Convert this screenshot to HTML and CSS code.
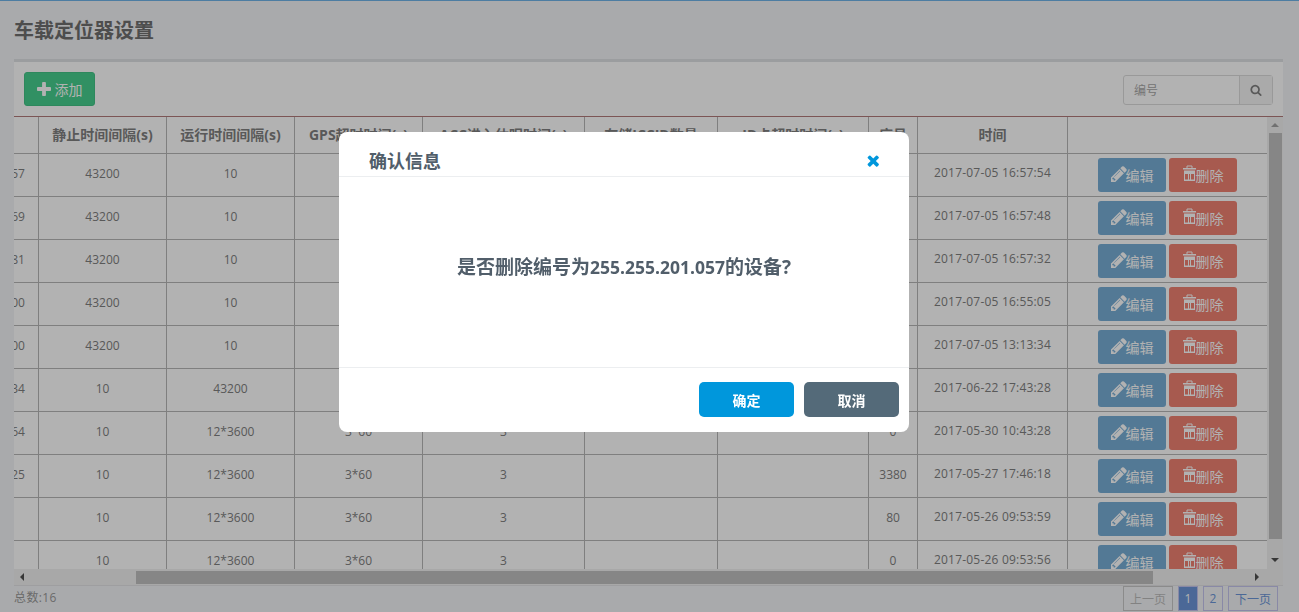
FILE: index.html
```html
<!DOCTYPE html>
<html lang="zh-CN">
<head>
<meta charset="utf-8">
<title>车载定位器设置</title>
<link rel="stylesheet" href="styles.css">
</head>
<body>
<svg class="defs" width="0" height="0" aria-hidden="true">
<symbol id="i-plus" viewBox="0 0 1408 1408"><path d="M1408 608v192q0 40-28 68t-68 28h-416v416q0 40-28 68t-68 28h-192q-40 0-68-28t-28-68v-416h-416q-40 0-68-28t-28-68v-192q0-40 28-68t68-28h416v-416q0-40 28-68t68-28h192q40 0 68 28t28 68v416h416q40 0 68 28t28 68z"/></symbol>
<symbol id="i-times" viewBox="240 230 1260 1340"><path d="M1490 1322q0 40-28 68l-136 136q-28 28-68 28t-68-28l-294-294-294 294q-28 28-68 28t-68-28l-136-136q-28-28-28-68t28-68l294-294-294-294q-28-28-28-68t28-68l136-136q28-28 68-28t68 28l294 294 294-294q28-28 68-28t68 28l136 136q28 28 28 68t-28 68l-294 294 294 294q28 28 28 68z"/></symbol>
<symbol id="i-search" viewBox="0 0 1792 1792"><path d="M1216 832q0-185-131.500-316.500t-316.500-131.500-316.500 131.500-131.500 316.500 131.500 316.500 316.500 131.500 316.500-131.500 131.500-316.500zm512 832q0 52-38 90t-90 38q-54 0-90-38l-343-342q-179 124-399 124-143 0-273.500-55.500t-225-150-150-225-55.500-273.500 55.500-273.500 150-225 225-150 273.500-55.500 273.500 55.500 225 150 150 225 55.500 273.500q0 220-124 399l343 343q37 37 37 90z"/></symbol>
<symbol id="i-pencil" viewBox="130 130 1540 1540"><path d="M491 1536l91-91-235-235-91 91v107h128v128h107zm523-928q0-22-22-22-10 0-17 7l-542 542q-7 7-7 17 0 22 22 22 10 0 17-7l542-542q7-7 7-17zm-54-192l416 416-832 832h-416v-416zm683 96q0 53-37 90l-166 166-416-416 166-165q36-38 90-38 53 0 91 38l235 234q37 39 37 91z"/></symbol>
<symbol id="i-trash" viewBox="0 0 13 16"><path d="M4 3V1h5v2" fill="none" stroke="currentColor" stroke-width="1"/><path d="M0 3h13v1.500H0zM1 5.500h11V16H1zM2 9h3v5.500H2zM6 9h1v5.500H6zM8 9h3v5.500H8z" fill-rule="evenodd"/></symbol>
</svg>

<div class="page">
  <h1 class="page-title">车载定位器设置</h1>
  <section class="card">
    <div class="toolbar">
      <button class="btn btn-add"><svg class="ico ico-plus"><use href="#i-plus"/></svg>添加</button>
      <div class="search">
        <span class="search-input">编号</span>
        <span class="search-btn"><svg class="ico ico-search"><use href="#i-search"/></svg></span>
      </div>
    </div>
    <div class="table-wrap">
      <table class="grid">
        <colgroup>
          <col class="c-no"><col class="c-n"><col class="c-n"><col class="c-n"><col class="c-acc"><col class="c-store"><col class="c-ic"><col class="c-seq"><col class="c-time"><col class="c-act">
        </colgroup>
        <thead>
          <tr><th>编号</th><th>静止时间间隔(s)</th><th>运行时间间隔(s)</th><th>GPS超时时间(s)</th><th>ACC进入休眠时间(s)</th><th>存储ICCID数量</th><th>ID卡超时时间(s)</th><th>序号</th><th>时间</th><th></th></tr>
        </thead>
        <tbody>
          <tr><td>255.255.201.057</td><td>43200</td><td>10</td><td>3*60</td><td>3</td><td></td><td></td><td>0</td><td class="time">2017-07-05 16:57:54</td><td class="acts"><button class="btn btn-edit"><svg class="ico ico-pen"><use href="#i-pencil"/></svg>编辑</button><button class="btn btn-del"><svg class="ico ico-trash"><use href="#i-trash"/></svg>删除</button></td></tr>
          <tr><td>255.255.201.069</td><td>43200</td><td>10</td><td>3*60</td><td>3</td><td></td><td></td><td>0</td><td class="time">2017-07-05 16:57:48</td><td class="acts"><button class="btn btn-edit"><svg class="ico ico-pen"><use href="#i-pencil"/></svg>编辑</button><button class="btn btn-del"><svg class="ico ico-trash"><use href="#i-trash"/></svg>删除</button></td></tr>
          <tr><td>255.255.201.081</td><td>43200</td><td>10</td><td>3*60</td><td>3</td><td></td><td></td><td>0</td><td class="time">2017-07-05 16:57:32</td><td class="acts"><button class="btn btn-edit"><svg class="ico ico-pen"><use href="#i-pencil"/></svg>编辑</button><button class="btn btn-del"><svg class="ico ico-trash"><use href="#i-trash"/></svg>删除</button></td></tr>
          <tr><td>255.255.201.100</td><td>43200</td><td>10</td><td>3*60</td><td>3</td><td></td><td></td><td>0</td><td class="time">2017-07-05 16:55:05</td><td class="acts"><button class="btn btn-edit"><svg class="ico ico-pen"><use href="#i-pencil"/></svg>编辑</button><button class="btn btn-del"><svg class="ico ico-trash"><use href="#i-trash"/></svg>删除</button></td></tr>
          <tr><td>255.255.201.200</td><td>43200</td><td>10</td><td>3*60</td><td>3</td><td></td><td></td><td>0</td><td class="time">2017-07-05 13:13:34</td><td class="acts"><button class="btn btn-edit"><svg class="ico ico-pen"><use href="#i-pencil"/></svg>编辑</button><button class="btn btn-del"><svg class="ico ico-trash"><use href="#i-trash"/></svg>删除</button></td></tr>
          <tr><td>255.255.201.034</td><td>10</td><td>43200</td><td>3*60</td><td>3</td><td></td><td></td><td>0</td><td class="time">2017-06-22 17:43:28</td><td class="acts"><button class="btn btn-edit"><svg class="ico ico-pen"><use href="#i-pencil"/></svg>编辑</button><button class="btn btn-del"><svg class="ico ico-trash"><use href="#i-trash"/></svg>删除</button></td></tr>
          <tr><td>255.255.201.064</td><td>10</td><td>12*3600</td><td>3*60</td><td>3</td><td></td><td></td><td>0</td><td class="time">2017-05-30 10:43:28</td><td class="acts"><button class="btn btn-edit"><svg class="ico ico-pen"><use href="#i-pencil"/></svg>编辑</button><button class="btn btn-del"><svg class="ico ico-trash"><use href="#i-trash"/></svg>删除</button></td></tr>
          <tr><td>255.255.201.025</td><td>10</td><td>12*3600</td><td>3*60</td><td>3</td><td></td><td></td><td>3380</td><td class="time">2017-05-27 17:46:18</td><td class="acts"><button class="btn btn-edit"><svg class="ico ico-pen"><use href="#i-pencil"/></svg>编辑</button><button class="btn btn-del"><svg class="ico ico-trash"><use href="#i-trash"/></svg>删除</button></td></tr>
          <tr><td></td><td>10</td><td>12*3600</td><td>3*60</td><td>3</td><td></td><td></td><td>80</td><td class="time">2017-05-26 09:53:59</td><td class="acts"><button class="btn btn-edit"><svg class="ico ico-pen"><use href="#i-pencil"/></svg>编辑</button><button class="btn btn-del"><svg class="ico ico-trash"><use href="#i-trash"/></svg>删除</button></td></tr>
          <tr><td></td><td>10</td><td>12*3600</td><td>3*60</td><td>3</td><td></td><td></td><td>0</td><td class="time">2017-05-26 09:53:56</td><td class="acts"><button class="btn btn-edit"><svg class="ico ico-pen"><use href="#i-pencil"/></svg>编辑</button><button class="btn btn-del"><svg class="ico ico-trash"><use href="#i-trash"/></svg>删除</button></td></tr>
        </tbody>
      </table>
      <div class="vbar">
        <span class="arrow arrow-up"></span>
        <span class="vthumb"></span>
        <span class="arrow arrow-down"></span>
      </div>
      <div class="hbar">
        <span class="arrow arrow-left"></span>
        <span class="hthumb"></span>
        <span class="arrow arrow-right"></span>
      </div>
    </div>
  </section>
  <footer class="foot">
    <span class="total">总数:16</span>
    <nav class="pager">
      <a class="pg pg-wide pg-off">上一页</a>
      <a class="pg pg-cur">1</a>
      <a class="pg">2</a>
      <a class="pg pg-wide">下一页</a>
    </nav>
  </footer>
</div>

<div class="overlay">
  <div class="modal">
    <div class="modal-head">
      <h2 class="modal-title">确认信息</h2>
      <svg class="ico ico-close"><use href="#i-times"/></svg>
    </div>
    <div class="modal-body"><span>是否删除编号为<span class="num">255.255.201.057</span>的设备?</span></div>
    <div class="modal-foot">
      <button class="mbtn mbtn-ok">确定</button>
      <button class="mbtn mbtn-no">取消</button>
    </div>
  </div>
</div>
</body>
</html>
```
FILE: styles.css
```css
* { box-sizing: border-box; }
html, body { margin: 0; height: 100%; overflow: hidden; }
body {
  background: #f3f4f6;
  color: #808080;
  font: 12px "Open Sans", "Noto Sans CJK SC", sans-serif;
  border-top: 1px solid #6fb4e8;
}
.defs { position: absolute; }
.ico { fill: currentColor; display: block; flex: none; }

.page { padding: 0 0 0 14px; display: flex; flex-direction: column; height: 611px; }
.page-title { margin: 0; height: 58px; padding-top: 16px; font-size: 20px; line-height: 28px; font-weight: 700; color: #6f6f6f; }

.card { width: 1269px; height: 527px; background: #fff; border-top: 3px solid #dfe1e4; display: flex; flex-direction: column; border-bottom: 1px solid #e2e3e6; }
.toolbar { height: 54px; padding: 10px 10px 0; display: flex; justify-content: space-between; flex: none; }
.btn { border: 0; padding: 0; font: 14px "Open Sans", "Noto Sans CJK SC", sans-serif; color: #fff; border-radius: 3px; display: flex; align-items: center; justify-content: center; }
.btn-add { width: 71px; height: 34px; background: #47cf8f; border: 1px solid #43c386; gap: 4px; }
.ico-plus { width: 14px; height: 14px; }
.search { width: 150px; height: 30px; margin-top: 3px; display: flex; border: 1px solid #dcdcdc; border-radius: 3px; }
.search-input { width: 116px; padding: 1px 0 0 10px; line-height: 28px; color: #a8a8a8; font-size: 12px; border-right: 1px solid #dcdcdc; }
.search-btn { flex: 1; display: flex; align-items: center; justify-content: center; color: #808080; background: #f4f4f4; }
.ico-search { width: 12px; height: 12px; }

.table-wrap { position: relative; flex: 1; overflow: hidden; border-top: 1px solid #b27a7a; }
.grid { border-collapse: collapse; table-layout: fixed; width: 1348px; margin-left: -95px; margin-top: -1px; }
.c-no { width: 119px; }
.c-n { width: 128px; }
.c-acc { width: 162px; }
.c-store { width: 133px; }
.c-ic { width: 151px; }
.c-seq { width: 49px; }
.c-time { width: 150px; }
.c-act { width: 200px; }
.grid th, .grid td { border: 1px solid #b7b7b7; text-align: center; padding: 0; white-space: nowrap; overflow: hidden; }
.grid th { height: 37px; font-size: 14px; font-weight: 700; color: #808080; border-top: 0; }
.grid td { height: 43px; padding-bottom: 2px; color: #808080; }
.grid td.time { letter-spacing: .2px; padding-bottom: 4px; }
.grid td.acts { padding: 0; }
.btn-edit, .btn-del { display: inline-flex; width: 68px; height: 34px; vertical-align: middle; }
.btn-edit { background: #78aed6; margin-right: 3px; }
.btn-del { background: #f08172; }
.ico-pen { width: 16px; height: 16px; margin: -2px -1px 0 0; }
.ico-trash { width: 13px; height: 16px; margin-top: -3px; }

.vbar { position: absolute; top: 0; right: 0; width: 16px; height: 452px; background: #f1f1f1; display: flex; flex-direction: column; align-items: center; }
.vthumb { width: 13px; height: 406px; background: #c1c1c1; margin-top: 6px; flex: none; }
.hbar { position: absolute; left: 0; bottom: 0; width: 100%; height: 16px; background: #f1f1f1; }
.hthumb { position: absolute; left: 122px; top: 2px; width: 1017px; height: 13px; background: #c1c1c1; }
.arrow { width: 0; height: 0; border: 4px solid transparent; flex: none; }
.arrow-up { margin-top: 6px; border-bottom-color: #a3a3a3; border-top-width: 0; }
.arrow-down { margin-top: 19px; border-top-color: #505050; border-bottom-width: 0; }
.arrow-left { position: absolute; left: 6px; top: 4px; border-right-color: #505050; border-left-width: 0; }
.arrow-right { position: absolute; left: 1241px; top: 4px; border-left-color: #505050; border-right-width: 0; }

.foot { flex: 1; display: flex; justify-content: space-between; padding-right: 21px; }
.total { padding-top: 3px; color: #999; line-height: 18px; letter-spacing: .4px; }
.pager { display: flex; gap: 5px; }
.pg { width: 20px; height: 25px; border: 1px solid #c4c4ee; color: #6c96d8; display: flex; align-items: center; justify-content: center; font-size: 12px; }
.pg-wide { width: 50px; }
.pg-off { border-color: #c8c8c8; color: #bbb; }
.pg-cur { background: #6c96d8; border-color: #c4c4ee; color: #fff; }

.overlay { position: fixed; inset: 0; background: rgba(0,0,0,.3); display: flex; align-items: flex-start; padding: 132px 0 0 339px; }
.modal { width: 570px; height: 300px; background: #fff; border-radius: 8px; display: flex; flex-direction: column; }
.modal-head { height: 45px; padding: 16px 29px 0 30px; display: flex; justify-content: space-between; border-bottom: 1px solid #eceef0; flex: none; }
.modal-title { margin: 0; font-size: 18px; line-height: 26px; font-weight: 700; color: #515e6a; }
.ico-close { width: 12px; height: 13px; margin-top: 6px; color: #0097dc; margin-right: 1px; }
.modal-body { height: 190px; display: flex; align-items: center; justify-content: center; font-size: 19px; font-weight: 700; color: #515e6a; padding-bottom: 13px; flex: none; }
.num { font-size: 17.500px; }
.modal-foot { flex: 1; border-top: 1px solid #eceef0; padding: 14px 10px 0 0; display: flex; justify-content: flex-end; gap: 10px; }
.mbtn { width: 95px; height: 35px; border: 0; border-radius: 5px; color: #fff; font: 700 14px "Open Sans", "Noto Sans CJK SC", sans-serif; }
.mbtn-ok { background: #0097dc; }
.mbtn-no { background: #546a79; }
```
